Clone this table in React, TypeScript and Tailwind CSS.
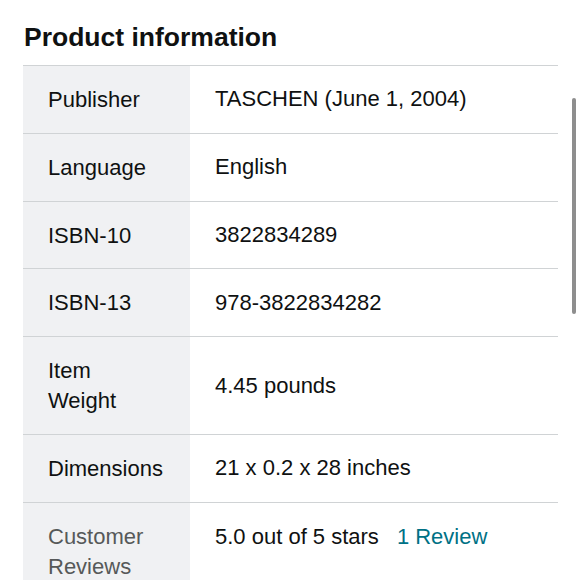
import React from "react";

const rows: { label: string[]; value: React.ReactNode; muted?: boolean; top?: boolean }[] = [
  { label: ["Publisher"], value: "TASCHEN (June 1, 2004)" },
  { label: ["Language"], value: "English" },
  { label: ["ISBN-10"], value: "3822834289" },
  { label: ["ISBN-13"], value: "978-3822834282" },
  { label: ["Item", "Weight"], value: "4.45 pounds" },
  { label: ["Dimensions"], value: "21 x 0.2 x 28 inches" },
  {
    label: ["Customer", "Reviews"],
    muted: true,
    top: true,
    value: (
      <span>
        5.0 out of 5 stars<span className="ml-[18px] text-[#007185]">1 Review</span>
      </span>
    ),
  },
];

export default function App() {
  return (
    <div
      className="relative h-[580px] w-[580px] overflow-hidden bg-white text-[#0f1111]"
      style={{ fontFamily: '"Liberation Sans", Arial, Helvetica, sans-serif' }}
    >
      <div className="pl-[24px] pt-[21px]">
        <h2 className="text-[26.5px] font-bold leading-[32px]">Product information</h2>
      </div>
      <div className="ml-[23px] mt-[12px] w-[535px]">
        {rows.map((r, i) => (
          <div key={i} className="flex border-t border-[#d0d3d5]">
            <div
              className={`w-[167px] shrink-0 bg-[#f0f1f3] pb-[17.8px] pl-[25px] pt-[19px] text-[22px] leading-[30px] ${
                r.muted ? "text-[#565959]" : ""
              }`}
            >
              {r.label.map((l, j) => (
                <div key={j}>{l}</div>
              ))}
            </div>
            <div
              className={`flex flex-1 pl-[25px] text-[22px] leading-[30px] ${
                r.top ? "items-start pt-[19px]" : "items-center"
              }`}
            >
              {r.value}
            </div>
          </div>
        ))}
      </div>
      <div className="absolute left-[572px] top-[98px] h-[216px] w-[4px] rounded-full bg-[#8e8e8e]" />
    </div>
  );
}
